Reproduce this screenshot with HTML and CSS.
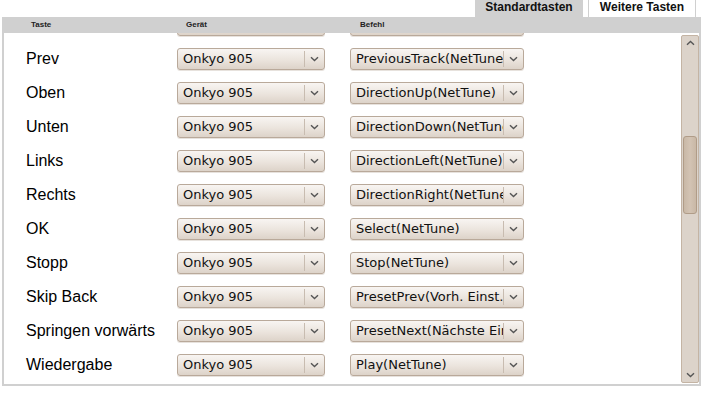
FILE: index.html
```html
<!DOCTYPE html>
<html lang="de">
<head>
<meta charset="utf-8">
<title>Tasten</title>
<link rel="stylesheet" href="styles.css">
</head>
<body>
<div class="tabs">
  <div class="tab active">Standardtasten</div>
  <div class="tab">Weitere Tasten</div>
</div>
<div class="table">
  <div class="thead">
    <span class="h-taste">Taste</span>
    <span class="h-geraet">Gerät</span>
    <span class="h-befehl">Befehl</span>
  </div>
  <div class="panel">
    <div class="list">
      <div class="row">
        <div class="label"></div>
        <div class="select dev"><span class="txt"></span><span class="arr"></span></div>
        <div class="select cmd"><span class="txt"></span><span class="arr"></span></div>
      </div>
      <div class="row">
        <div class="label">Prev</div>
        <div class="select dev"><span class="txt">Onkyo 905</span><span class="arr"><svg width="9" height="6" viewBox="0 0 9 6"><path d="M1 1.2 L4.5 4.5 L8 1.2" fill="none" stroke="#555" stroke-width="1.4"/></svg></span></div>
        <div class="select cmd"><span class="txt">PreviousTrack(NetTune)</span><span class="arr"><svg width="9" height="6" viewBox="0 0 9 6"><path d="M1 1.2 L4.5 4.5 L8 1.2" fill="none" stroke="#555" stroke-width="1.4"/></svg></span></div>
      </div>
      <div class="row">
        <div class="label">Oben</div>
        <div class="select dev"><span class="txt">Onkyo 905</span><span class="arr"><svg width="9" height="6" viewBox="0 0 9 6"><path d="M1 1.2 L4.5 4.5 L8 1.2" fill="none" stroke="#555" stroke-width="1.4"/></svg></span></div>
        <div class="select cmd"><span class="txt">DirectionUp(NetTune)</span><span class="arr"><svg width="9" height="6" viewBox="0 0 9 6"><path d="M1 1.2 L4.5 4.5 L8 1.2" fill="none" stroke="#555" stroke-width="1.4"/></svg></span></div>
      </div>
      <div class="row">
        <div class="label">Unten</div>
        <div class="select dev"><span class="txt">Onkyo 905</span><span class="arr"><svg width="9" height="6" viewBox="0 0 9 6"><path d="M1 1.2 L4.5 4.5 L8 1.2" fill="none" stroke="#555" stroke-width="1.4"/></svg></span></div>
        <div class="select cmd"><span class="txt">DirectionDown(NetTune)</span><span class="arr"><svg width="9" height="6" viewBox="0 0 9 6"><path d="M1 1.2 L4.5 4.5 L8 1.2" fill="none" stroke="#555" stroke-width="1.4"/></svg></span></div>
      </div>
      <div class="row">
        <div class="label">Links</div>
        <div class="select dev"><span class="txt">Onkyo 905</span><span class="arr"><svg width="9" height="6" viewBox="0 0 9 6"><path d="M1 1.2 L4.5 4.5 L8 1.2" fill="none" stroke="#555" stroke-width="1.4"/></svg></span></div>
        <div class="select cmd"><span class="txt">DirectionLeft(NetTune)</span><span class="arr"><svg width="9" height="6" viewBox="0 0 9 6"><path d="M1 1.2 L4.5 4.5 L8 1.2" fill="none" stroke="#555" stroke-width="1.4"/></svg></span></div>
      </div>
      <div class="row">
        <div class="label">Rechts</div>
        <div class="select dev"><span class="txt">Onkyo 905</span><span class="arr"><svg width="9" height="6" viewBox="0 0 9 6"><path d="M1 1.2 L4.5 4.5 L8 1.2" fill="none" stroke="#555" stroke-width="1.4"/></svg></span></div>
        <div class="select cmd"><span class="txt">DirectionRight(NetTune)</span><span class="arr"><svg width="9" height="6" viewBox="0 0 9 6"><path d="M1 1.2 L4.5 4.5 L8 1.2" fill="none" stroke="#555" stroke-width="1.4"/></svg></span></div>
      </div>
      <div class="row">
        <div class="label">OK</div>
        <div class="select dev"><span class="txt">Onkyo 905</span><span class="arr"><svg width="9" height="6" viewBox="0 0 9 6"><path d="M1 1.2 L4.5 4.5 L8 1.2" fill="none" stroke="#555" stroke-width="1.4"/></svg></span></div>
        <div class="select cmd"><span class="txt">Select(NetTune)</span><span class="arr"><svg width="9" height="6" viewBox="0 0 9 6"><path d="M1 1.2 L4.5 4.5 L8 1.2" fill="none" stroke="#555" stroke-width="1.4"/></svg></span></div>
      </div>
      <div class="row">
        <div class="label">Stopp</div>
        <div class="select dev"><span class="txt">Onkyo 905</span><span class="arr"><svg width="9" height="6" viewBox="0 0 9 6"><path d="M1 1.2 L4.5 4.5 L8 1.2" fill="none" stroke="#555" stroke-width="1.4"/></svg></span></div>
        <div class="select cmd"><span class="txt">Stop(NetTune)</span><span class="arr"><svg width="9" height="6" viewBox="0 0 9 6"><path d="M1 1.2 L4.5 4.5 L8 1.2" fill="none" stroke="#555" stroke-width="1.4"/></svg></span></div>
      </div>
      <div class="row">
        <div class="label">Skip Back</div>
        <div class="select dev"><span class="txt">Onkyo 905</span><span class="arr"><svg width="9" height="6" viewBox="0 0 9 6"><path d="M1 1.2 L4.5 4.5 L8 1.2" fill="none" stroke="#555" stroke-width="1.4"/></svg></span></div>
        <div class="select cmd"><span class="txt">PresetPrev(Vorh. Einst.)</span><span class="arr"><svg width="9" height="6" viewBox="0 0 9 6"><path d="M1 1.2 L4.5 4.5 L8 1.2" fill="none" stroke="#555" stroke-width="1.4"/></svg></span></div>
      </div>
      <div class="row">
        <div class="label">Springen vorwärts</div>
        <div class="select dev"><span class="txt">Onkyo 905</span><span class="arr"><svg width="9" height="6" viewBox="0 0 9 6"><path d="M1 1.2 L4.5 4.5 L8 1.2" fill="none" stroke="#555" stroke-width="1.4"/></svg></span></div>
        <div class="select cmd"><span class="txt">PresetNext(Nächste Einst.)</span><span class="arr"><svg width="9" height="6" viewBox="0 0 9 6"><path d="M1 1.2 L4.5 4.5 L8 1.2" fill="none" stroke="#555" stroke-width="1.4"/></svg></span></div>
      </div>
      <div class="row">
        <div class="label">Wiedergabe</div>
        <div class="select dev"><span class="txt">Onkyo 905</span><span class="arr"><svg width="9" height="6" viewBox="0 0 9 6"><path d="M1 1.2 L4.5 4.5 L8 1.2" fill="none" stroke="#555" stroke-width="1.4"/></svg></span></div>
        <div class="select cmd"><span class="txt">Play(NetTune)</span><span class="arr"><svg width="9" height="6" viewBox="0 0 9 6"><path d="M1 1.2 L4.5 4.5 L8 1.2" fill="none" stroke="#555" stroke-width="1.4"/></svg></span></div>
      </div>
    </div>
    <div class="scrollbar">
      <div class="sb-btn"><svg width="9" height="6" viewBox="0 0 9 6"><path d="M1 4.8 L4.5 1.5 L8 4.8" fill="none" stroke="#555" stroke-width="1.4"/></svg></div>
      <div class="sb-track">
        <div class="sb-thumb"></div>
      </div>
      <div class="sb-btn"><svg width="9" height="6" viewBox="0 0 9 6"><path d="M1 1.2 L4.5 4.5 L8 1.2" fill="none" stroke="#555" stroke-width="1.4"/></svg></div>
    </div>
  </div>
</div>
</body>
</html>
```

FILE: styles.css
```css
html, body {
  margin: 0;
  padding: 0;
  background: #ffffff;
}

body {
  width: 717px;
  height: 398px;
  overflow: hidden;
  font-family: "Liberation Sans", Arial, sans-serif;
  color: #000;
}

.tabs {
  display: flex;
  justify-content: flex-end;
  gap: 5px;
  height: 17px;
  padding-right: 21px;
}

.tab {
  box-sizing: border-box;
  width: 108px;
  height: 17px;
  font-size: 12px;
  font-weight: bold;
  line-height: 15px;
  text-align: center;
  color: #111;
  background: #ffffff;
  border-left: 1px solid #d0d0d0;
  border-right: 1px solid #d0d0d0;
}

.tab.active {
  background: #d0d0d0;
  border: none;
}

.table {
  margin-left: 2px;
  width: 699px;
}

.thead {
  height: 16px;
  background: #d0d0d0;
  font-size: 8px;
  line-height: 10px;
  font-weight: bold;
  color: #222;
  display: flex;
  align-items: center;
  padding-left: 29px;
  white-space: nowrap;
}

.h-taste {
  width: 155px;
}

.h-geraet {
  width: 174px;
}

.panel {
  display: flex;
  height: 351px;
  border-left: 2px solid #d0d0d0;
  border-right: 2px solid #d0d0d0;
  border-bottom: 2px solid #d0d0d0;
  background: #fff;
}

.list {
  flex: 1;
  overflow: hidden;
}

.list > .row:first-child {
  margin-top: -25px;
}

.row {
  display: flex;
  align-items: center;
  height: 34px;
  padding-left: 22px;
}

.label {
  width: 151px;
  font-size: 16px;
  white-space: nowrap;
}

.select {
  box-sizing: border-box;
  display: flex;
  height: 22px;
  border: 1px solid #b9a99a;
  border-radius: 3px;
  background: linear-gradient(#f8f5f2, #ebe4dd 55%, #ddd3c9);
  box-shadow: 0 1px 0 rgba(160, 140, 120, 0.25);
  font-family: "DejaVu Sans", sans-serif;
  font-size: 13px;
  color: #111;
}

.select.dev {
  width: 148px;
}

.select.cmd {
  width: 174px;
  margin-left: 25px;
}

.txt {
  flex: 1;
  overflow: hidden;
  white-space: nowrap;
  padding-left: 5px;
  line-height: 20px;
}

.arr {
  width: 19px;
  display: flex;
  align-items: center;
  justify-content: center;
  margin: 2px 0;
  border-left: 1px solid #c8bcb0;
}

.scrollbar {
  box-sizing: border-box;
  width: 18px;
  margin: 2px 0 1px 0;
  display: flex;
  flex-direction: column;
  background: #dcd3ca;
  border: 1px solid #c4b4a4;
  border-radius: 2px;
}

.sb-btn {
  height: 14px;
  display: flex;
  align-items: center;
  justify-content: center;
}

.sb-track {
  flex: 1;
  padding: 86px 1px 0 1px;
}

.sb-thumb {
  height: 76px;
  border: 1px solid #b09c88;
  border-radius: 3px;
  background: linear-gradient(90deg, #c9b8a6, #d3c3b3 50%, #c9b8a6);
}
```
